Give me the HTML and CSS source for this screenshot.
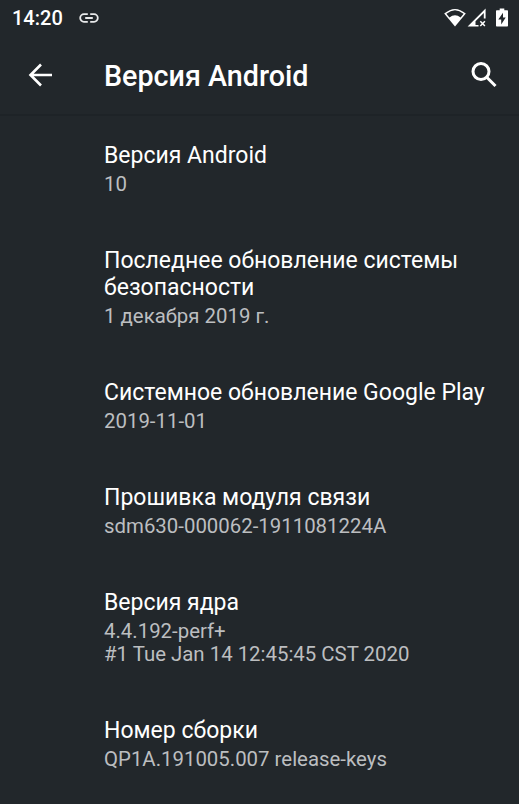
FILE: index.html
```html
<!DOCTYPE html>
<html lang="ru">
<head>
    <meta charset="UTF-8">
    <meta name="viewport" content="width=device-width, initial-scale=1.0">
    <title>Версия Android</title>
    <link rel="stylesheet" href="styles.css">
</head>
<body>
    <div class="status-bar">
        <span class="clock">14:20</span>
        <svg class="link-icon" width="20" height="10" viewBox="0 0 20 10" fill="none" stroke="#e8e9ea" stroke-width="1.8">
            <path d="M8.8 1.2H5a3.8 3.8 0 0 0 0 7.6h3.8M11.2 1.2H15a3.8 3.8 0 0 1 0 7.6h-3.8M6.2 5h7.6"/>
        </svg>
        <div class="status-icons">
            <svg width="22" height="20" viewBox="0 0 22 20">
                <path d="M11 18.5.2 5.6Q11-3.8 21.8 5.6z" fill="#fff"/>
                <path d="M2.4 5.8Q11-1.2 19.6 5.8L16.6 9.6Q11 4.8 5.4 9.6z" fill="#22272b"/>
            </svg>
            <svg class="signal" width="20" height="20" viewBox="0 0 20 20">
                <path d="M.6 18.5 18.6.6v10h-1.8V5L8.5 13.3V17h3v1.5z" fill="#fff"/>
                <path d="M13.3 13.2l4.6 4.8M17.9 13.2l-4.6 4.8" stroke="#fff" stroke-width="1.5"/>
            </svg>
            <svg class="battery" width="12" height="20" viewBox="0 0 12 20">
                <path d="M3.7.5h4.6v1.8H11c.6 0 1 .4 1 1v14.2c0 .6-.4 1-1 1H1c-.6 0-1-.4-1-1V3.3c0-.6.4-1 1-1h2.7z" fill="#fff"/>
                <path d="M7 4.8 2.3 11.4h2.9v5.1l4.5-7H7z" fill="#22272b"/>
            </svg>
        </div>
    </div>

    <header class="toolbar">
        <svg class="back" width="24" height="24" viewBox="0 0 24 24" fill="none" stroke="#fff" stroke-width="2.6">
            <path d="M24 12H2.5M13 1.5 2.5 12 13 22.5"/>
        </svg>
        <h1>Версия Android</h1>
        <svg class="search" width="28" height="28" viewBox="0 0 28 28" fill="none" stroke="#fff" stroke-width="3">
            <circle cx="11" cy="10.5" r="8"/>
            <path d="M16.5 16l9 9"/>
        </svg>
    </header>

    <main class="list">
        <div class="item">
            <div class="title">Версия Android</div>
            <div class="summary">10</div>
        </div>
        <div class="item">
            <div class="title">Последнее обновление системы безопасности</div>
            <div class="summary">1 декабря 2019 г.</div>
        </div>
        <div class="item">
            <div class="title">Системное обновление Google Play</div>
            <div class="summary">2019-11-01</div>
        </div>
        <div class="item">
            <div class="title">Прошивка модуля связи</div>
            <div class="summary">sdm630-000062-1911081224A</div>
        </div>
        <div class="item">
            <div class="title">Версия ядра</div>
            <div class="summary">4.4.192-perf+<br>#1 Tue Jan 14 12:45:45 CST 2020</div>
        </div>
        <div class="item">
            <div class="title">Номер сборки</div>
            <div class="summary">QP1A.191005.007 release-keys</div>
        </div>
    </main>
</body>
</html>
```
FILE: styles.css
```css
* { box-sizing: border-box; }
body { margin: 0; height: 804px; overflow: hidden; background: #22272b; color: #fff; font-family: Roboto, sans-serif; }

.status-bar { display: flex; align-items: center; height: 35px; padding: 0 11px 0 12px; }
.clock { padding-top: 2px; font-size: 20px; font-weight: 500; line-height: 33px; }
.link-icon { margin-left: 16px; }
.status-icons { display: flex; margin-left: auto; }
.signal { margin-left: 1px; }
.battery { margin-left: 9px; }

.toolbar { display: flex; align-items: center; height: 81px; padding: 0 21px 0 28px; border-bottom: 2px solid #1e2327; }
.toolbar h1 { flex: 1; margin: 0 0 0 52px; padding-top: 2px; font-size: 28.7px; font-weight: 500; line-height: 34px; }

.list { padding-left: 104px; }
.item { padding: 26px 27px 24.1px 0; }
.title { font-size: 23px; line-height: 27.4px; }
.summary { margin-top: 3.5px; font-size: 20.4px; line-height: 23.8px; color: #bcbec0; }
```
